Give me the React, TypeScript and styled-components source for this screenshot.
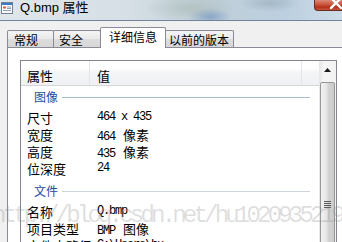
import React from "react";
import styled, { createGlobalStyle } from "styled-components";

type Row = { name: string; value: string };
type Group = { title: string; active?: boolean; rows: Row[] };

const tabs = [
  { label: "常规", w: 47, pad: 6 },
  { label: "安全", w: 48, pad: 5 },
  { label: "详细信息", w: 66, pad: 8, active: true },
  { label: "以前的版本", w: 69, pad: 3 },
];

const groups: Group[] = [
  {
    title: "图像",
    active: true,
    rows: [
      { name: "尺寸", value: "464 x 435" },
      { name: "宽度", value: "464 像素" },
      { name: "高度", value: "435 像素" },
      { name: "位深度", value: "24" },
    ],
  },
  {
    title: "文件",
    rows: [
      { name: "名称", value: "Q.bmp" },
      { name: "项目类型", value: "BMP 图像" },
      { name: "文件夹路径", value: "C:\\Users\\hu" },
    ],
  },
];

// split a value into ascii / chinese runs, they use different fonts
function renderValue(value: string) {
  return value.split(/([\u4e00-\u9fff]+)/).map((part, i) =>
    /[\u4e00-\u9fff]/.test(part) ? <Cjk key={i}>{part}</Cjk> : <span key={i}>{part}</span>
  );
}

export default function App() {
  return (
    <>
      <GlobalStyle />
      <Window>
        <TitleBar>
          <FileIcon width="12" height="12" viewBox="0 0 12 12">
            <rect x="0.5" y="0.5" width="11" height="11" fill="#fff" stroke="#6f7f94" />
            <rect x="1" y="1" width="10" height="2" fill="#3d78c8" />
            <rect x="2" y="4.5" width="3" height="2" fill="#d95b3a" />
            <rect x="6" y="4.5" width="4" height="1" fill="#8a9bb3" />
            <rect x="2" y="8" width="8" height="1" fill="#8a9bb3" />
            <rect x="6" y="6" width="4" height="1" fill="#8a9bb3" />
          </FileIcon>
          <Title>Q.bmp 属性</Title>
          <CloseButton>
            <svg width="12" height="12" viewBox="0 0 12 12">
              <path d="M1 1 L11 11 M11 1 L1 11" stroke="#fff" strokeWidth="2.4" strokeLinecap="square" />
            </svg>
          </CloseButton>
        </TitleBar>

        <TabStrip>
          {tabs.map((t) => (
            <Tab key={t.label} $w={t.w} $pad={t.pad} $active={!!t.active}>
              {t.label}
            </Tab>
          ))}
        </TabStrip>

        <Panel>
          <ListBox>
            <ListContent>
              <Header>
                <HeaderCell $pad={6}>属性</HeaderCell>
                <HeaderCell $pad={7}>值</HeaderCell>
                <HeaderCell $pad={0} />
              </Header>
              {groups.map((g, gi) => (
                <React.Fragment key={g.title}>
                  <GroupRow $first={gi === 0}>
                    <GroupTitle>{g.title}</GroupTitle>
                    <GroupLine $active={!!g.active} />
                  </GroupRow>
                  {g.rows.map((r) => (
                    <PropRow key={r.name}>
                      <PropName>{r.name}</PropName>
                      <PropValue>{renderValue(r.value)}</PropValue>
                    </PropRow>
                  ))}
                </React.Fragment>
              ))}
            </ListContent>
            <ScrollBar>
              <ScrollButton>
                <svg width="7" height="4" viewBox="0 0 7 4">
                  <path d="M0 4 L3.5 0 L7 4 Z" fill="#1a1a1a" />
                </svg>
              </ScrollButton>
              <Thumb>
                <Grip>
                  <span />
                  <span />
                  <span />
                  <span />
                </Grip>
              </Thumb>
            </ScrollBar>
          </ListBox>
        </Panel>

        <Watermark>http://blog.csdn.net/hu1020935219</Watermark>
      </Window>
    </>
  );
}

const GlobalStyle = createGlobalStyle`
  html, body {
    margin: 0;
    padding: 0;
    overflow: hidden;
    background: #f0f0f0;
  }
  body {
    font-family: "Noto Sans CJK SC", "Liberation Sans", sans-serif;
    color: #000;
  }
`;

const Window = styled.div`
  position: relative;
  width: 357px;
  height: 260px;
  overflow: hidden;
  background: #f0f0f0;
  display: flex;
  flex-direction: column;
`;

const TitleBar = styled.div`
  height: 20px;
  flex: none;
  display: flex;
  align-items: flex-start;
  border-bottom: 1px solid #71859a;
  background:
    radial-gradient(ellipse 22px 9px at 210px 17px, rgba(60, 110, 180, 0.4), transparent),
    radial-gradient(ellipse 30px 9px at 270px 3px, rgba(110, 130, 140, 0.3), transparent),
    radial-gradient(ellipse 45px 14px at 190px 8px, rgba(150, 170, 155, 0.4), transparent),
    linear-gradient(to right, #dfe6ec 0%, #d6dfe5 35%, #c0cfd9 60%, #bccfe0 80%, #d2dfea 100%);
`;

const FileIcon = styled.svg`
  margin: 2px 0 0 1px;
  flex: none;
`;

const Title = styled.span`
  margin-left: 7px;
  font-family: "Liberation Sans", "Noto Sans CJK SC", sans-serif;
  font-size: 13px;
  line-height: 16px;
  color: #000;
`;

const CloseButton = styled.div`
  margin-left: auto;
  width: 43px;
  height: 11px;
  box-sizing: border-box;
  border: 1px solid #6b2b20;
  border-top: none;
  border-radius: 0 0 4px 4px;
  background: linear-gradient(#d98a78, #c9553b 45%, #b3301a 70%, #c2573f);
  display: flex;
  justify-content: center;
  align-items: flex-end;
  overflow: hidden;
  svg {
    margin-bottom: 1px;
  }
`;

const TabStrip = styled.div`
  flex: none;
  height: 20px;
  margin-top: 6px;
  padding-left: 7px;
  display: flex;
  align-items: flex-end;
`;

const Tab = styled.div<{ $w: number; $pad: number; $active: boolean }>`
  position: relative;
  z-index: ${(p) => (p.$active ? 1 : 0)};
  box-sizing: border-box;
  width: ${(p) => p.$w}px;
  height: ${(p) => (p.$active ? 21 : 17)}px;
  margin-left: -1px;
  margin-bottom: ${(p) => (p.$active ? -1 : 0)}px;
  padding: 1px 0 0 ${(p) => p.$pad}px;
  border: 1px solid #898c95;
  border-bottom: none;
  border-radius: 2px 2px 0 0;
  background: ${(p) => (p.$active ? "#fff" : "linear-gradient(#f4f4f4, #e9e9e9 50%, #dcdcdc 51%, #d7d7d7)")};
  font-size: 12px;
  line-height: 16px;
  white-space: nowrap;
  &:first-child {
    margin-left: 0;
  }
`;

const Panel = styled.div`
  flex: 1;
  margin-left: 7px;
  padding: 12px 0 0 12px;
  border: 1px solid #898c95;
  background: #fff;
`;

const ListBox = styled.div`
  box-sizing: border-box;
  width: 317px;
  height: 220px;
  border: 1px solid #828790;
  display: flex;
  background: #fff;
`;

const ListContent = styled.div`
  flex: 1;
  display: flex;
  flex-direction: column;
`;

const Header = styled.div`
  height: 24px;
  flex: none;
  display: grid;
  grid-template-columns: 69px 212px 1fr;
  border-bottom: 1px solid #d5d5d5;
  background: linear-gradient(#ffffff 0%, #ffffff 30%, #f4f5f7 45%, #eff1f4 100%);
`;

const HeaderCell = styled.div<{ $pad: number }>`
  box-sizing: border-box;
  padding: 6px 0 0 ${(p) => p.$pad}px;
  border-right: 1px solid #e2e6eb;
  font-size: 13px;
  line-height: 18px;
  &:last-child {
    border-right: none;
  }
`;

const GroupRow = styled.div<{ $first: boolean }>`
  height: 20px;
  flex: none;
  margin: ${(p) => (p.$first ? 1 : 4)}px 9px 2px 13px;
  display: flex;
  align-items: center;
`;

const GroupTitle = styled.span`
  font-size: 12px;
  line-height: 20px;
  color: #1e4aa6;
`;

const GroupLine = styled.div<{ $active: boolean }>`
  flex: 1;
  height: 1px;
  margin-left: 4px;
  background: ${(p) => (p.$active ? "#a9bdd6" : "#cdd4dc")};
`;

const PropRow = styled.div`
  height: 17px;
  flex: none;
  display: grid;
  grid-template-columns: 69px 1fr;
`;

const PropName = styled.div`
  padding-left: 6px;
  font-size: 13px;
  line-height: 17px;
  white-space: nowrap;
`;

const PropValue = styled.div`
  padding-left: 7px;
  font-family: "Liberation Mono", "Noto Sans CJK SC", monospace;
  font-size: 12px;
  letter-spacing: -1.2px;
  line-height: 17px;
  white-space: nowrap;
  color: #000;
`;

const Cjk = styled.span`
  margin-left: 2px;
  font-family: "Noto Sans CJK SC", sans-serif;
  font-size: 13px;
  letter-spacing: 0;
`;

const ScrollBar = styled.div`
  width: 17px;
  flex: none;
  display: flex;
  flex-direction: column;
  background: linear-gradient(to right, #e6e6e6, #f6f6f6 30%, #f2f2f2);
`;

const ScrollButton = styled.div`
  height: 17px;
  flex: none;
  display: flex;
  justify-content: center;
  align-items: center;
`;

const Thumb = styled.div`
  flex: none;
  height: 244px;
  margin: 4px 1px 0 1px;
  box-sizing: border-box;
  border: 1px solid #979797;
  border-radius: 2px;
  background: linear-gradient(to right, #f3f3f3, #e4e4e4 45%, #d4d4d4 55%, #cbcbcb);
  display: flex;
  justify-content: center;
  align-items: center;
`;

const Grip = styled.div`
  display: flex;
  flex-direction: column;
  gap: 1px;
  span {
    width: 7px;
    height: 1px;
    background: #5a5a5a;
  }
`;

const Watermark = styled.div`
  position: absolute;
  left: -8px;
  top: 204px;
  font-family: "Liberation Mono", monospace;
  font-size: 24px;
  letter-spacing: -3.8px;
  line-height: 24px;
  color: rgba(140, 140, 140, 0.28);
  white-space: nowrap;
  pointer-events: none;
`;
